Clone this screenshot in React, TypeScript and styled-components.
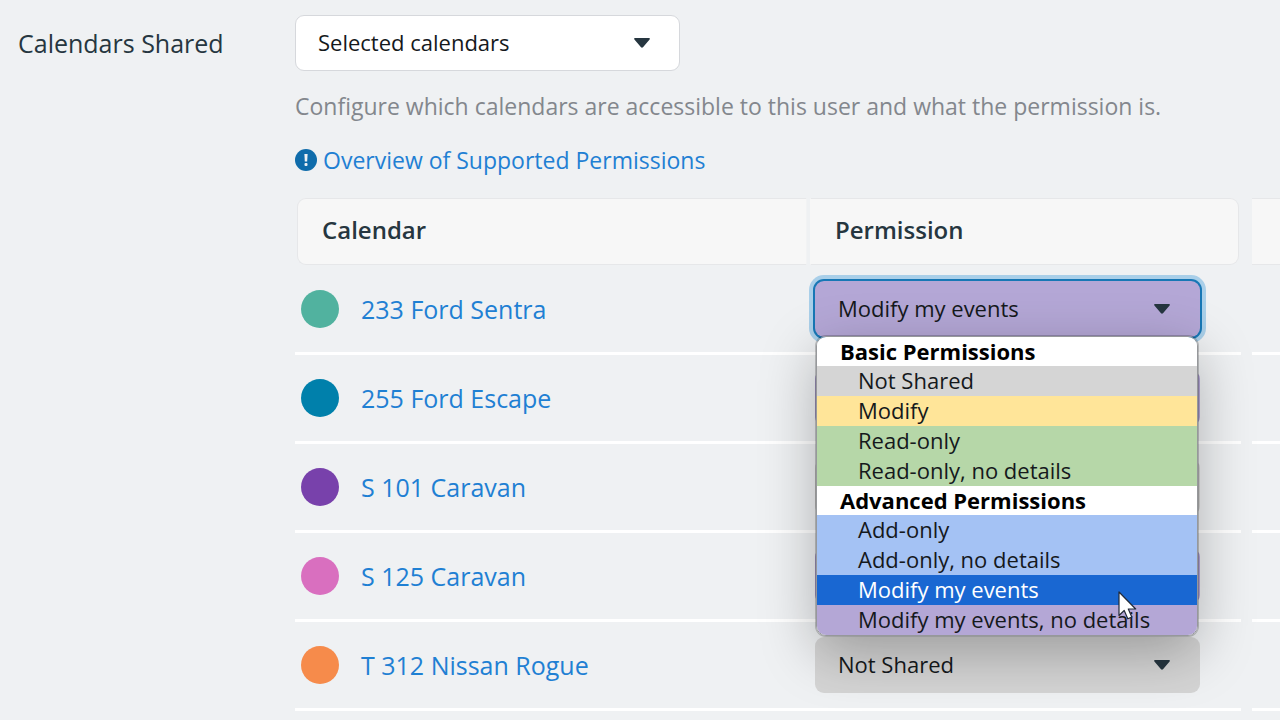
import React, { useState } from "react";
import styled, { createGlobalStyle, css } from "styled-components";

const GlobalStyle = createGlobalStyle`
  * { box-sizing: border-box; }
  body {
    margin: 0;
    background: #eff1f3;
    color: #263640;
    font-family: "Open Sans", "Noto Sans", sans-serif;
    font-size: 24px;
    line-height: 34px;
    overflow: hidden;
  }
`;

type Permission = "none" | "modify" | "read" | "add" | "own";

const tones: Record<Permission, string> = {
  none: "#d5d5d5",
  modify: "#ffe599",
  read: "#b6d7a8",
  add: "#a4c2f4",
  own: "#b4a7d6",
};

const Page = styled.main`
  display: flex;
  align-items: flex-start;
  padding: 15px 0 0 18px;
`;

const FieldLabel = styled.label`
  flex: none;
  width: 277px;
  padding-top: 11px;
  font-size: 25px;
`;

const Content = styled.section`
  flex: 1;
  min-width: 0;
`;

const SelectWrap = styled.div`
  position: relative;
  width: 385px;
  max-width: 100%;
`;

const Select = styled.select<{ $tone?: string; $open?: boolean }>`
  display: block;
  appearance: none;
  width: 100%;
  height: 56px;
  padding: 0 56px 2px 22px;
  border: 1px solid ${(p) => (p.$tone ? "transparent" : "#d6d8dc")};
  border-radius: 9px;
  background: ${(p) => p.$tone ?? "#fff"};
  color: #15191c;
  font: inherit;
  font-size: 22px;
  outline: none;
  ${(p) =>
    p.$open &&
    css`
      box-shadow: 0 0 0 2px #1777b5, 0 0 0 6px #a9cfe9;
    `}
`;

const CaretIcon = styled.svg`
  position: absolute;
  right: 30px;
  top: 23px;
  width: 16px;
  height: 10px;
  pointer-events: none;
`;

const Caret = () => (
  <CaretIcon viewBox="0 0 16 10" aria-hidden="true">
    <path d="M1 0h14c.9 0 1.2.8.6 1.5L9.2 9a1.6 1.6 0 0 1-2.4 0L.4 1.5C-.2.8.1 0 1 0z" fill="#263640" />
  </CaretIcon>
);

const Help = styled.p`
  margin: 18px 0 0;
  color: #83878d;
  font-size: 23px;
`;

const HelpLink = styled.a`
  display: flex;
  align-items: center;
  gap: 6px;
  width: fit-content;
  margin: 20px 0 21px;
  color: #1f80d3;
  font-size: 23px;
  text-decoration: none;
`;

const Tables = styled.div`
  display: flex;
  gap: 11px;
`;

const Table = styled.table`
  flex: 1;
  min-width: 0;
  table-layout: fixed;
  border-spacing: 0;
`;

const HeadCell = styled.th<{ $width?: string }>`
  width: ${(p) => p.$width ?? "auto"};
  padding: 0 0 1px;
  text-align: left;
  font-weight: 600;
`;

const HeadBox = styled.div<{ $edge: "start" | "end" | "open" }>`
  height: 67px;
  padding: 14px 24px;
  border: 1px solid #e6e7e9;
  background: #f7f7f7;
  ${(p) =>
    p.$edge === "start" &&
    css`
      margin: 0 2px;
      border-right-color: #f2f3f4;
      border-radius: 9px 0 0 9px;
    `}
  ${(p) =>
    p.$edge === "end" &&
    css`
      margin: 0 2px 0 1px;
      border-left-color: #f7f7f7;
      border-radius: 0 9px 9px 0;
    `}
  ${(p) =>
    p.$edge === "open" &&
    css`
      padding: 0;
      border-width: 1px 0;
    `}
`;

const Cell = styled.td`
  height: 89px;
  padding: 0 0 0 6px;
  border-bottom: 3px solid #fff;
  vertical-align: middle;
`;

const CalendarName = styled.div`
  display: flex;
  align-items: center;
  gap: 22px;
`;

const Dot = styled.span<{ $color: string }>`
  width: 38px;
  height: 38px;
  border-radius: 50%;
  background: ${(p) => p.$color};
`;

const CalendarLink = styled.a`
  color: #1f80d3;
  font-size: 25px;
  text-decoration: none;
`;

const SideTable = styled.table`
  flex: none;
  width: 28px;
  border-spacing: 0;
`;

const Menu = styled.div`
  position: absolute;
  z-index: 2;
  top: 55px;
  left: 1px;
  right: 2px;
  border: 1px solid #96989b;
  border-radius: 10px;
  box-shadow: 0 0 0 1px rgba(0, 0, 0, 0.2), 0 16px 56px rgba(0, 0, 0, 0.28);
  color: #15191c;
  font-size: 22px;
`;

const MenuList = styled.div`
  overflow: hidden;
  border-radius: 9px;
`;

const GroupTitle = styled.div`
  height: 29px;
  padding-left: 23px;
  background: #fff;
  color: #000;
  font-weight: 700;
  line-height: 28px;
`;

const Option = styled.div<{ $tone: string; $active: boolean }>`
  height: 30px;
  padding-left: 41px;
  background: ${(p) => (p.$active ? "#1967d2" : p.$tone)};
  color: ${(p) => (p.$active ? "#fff" : "inherit")};
  line-height: 28px;
  white-space: nowrap;
`;

const Pointer = styled.svg`
  position: absolute;
  right: 59px;
  bottom: 15px;
  width: 20px;
  height: 29px;
`;

const groups: { title: string; options: { label: string; tone: Permission }[] }[] = [
  {
    title: "Basic Permissions",
    options: [
      { label: "Not Shared", tone: "none" },
      { label: "Modify", tone: "modify" },
      { label: "Read-only", tone: "read" },
      { label: "Read-only, no details", tone: "read" },
    ],
  },
  {
    title: "Advanced Permissions",
    options: [
      { label: "Add-only", tone: "add" },
      { label: "Add-only, no details", tone: "add" },
      { label: "Modify my events", tone: "own" },
      { label: "Modify my events, no details", tone: "own" },
    ],
  },
];

const toneOf = (label: string) =>
  tones[groups.flatMap((g) => g.options).find((o) => o.label === label)?.tone ?? "none"];

const calendars = [
  { name: "233 Ford Sentra", color: "#51b29f", permission: "Modify my events" },
  { name: "255 Ford Escape", color: "#0080ab", permission: "Modify my events" },
  { name: "S 101 Caravan", color: "#7841ab", permission: "Not Shared" },
  { name: "S 125 Caravan", color: "#d96fbf", permission: "Modify my events" },
  { name: "T 312 Nissan Rogue", color: "#f68b4b", permission: "Not Shared" },
];

function PermissionMenu({ value, onPick }: { value: string; onPick: (label: string) => void }) {
  return (
    <Menu>
      <MenuList role="listbox" aria-label="Permission">
        {groups.map((group) => (
          <div role="group" aria-label={group.title} key={group.title}>
            <GroupTitle>{group.title}</GroupTitle>
            {group.options.map((o) => (
              <Option
                key={o.label}
                role="option"
                aria-selected={o.label === value}
                $tone={tones[o.tone]}
                $active={o.label === value}
                onClick={() => onPick(o.label)}
              >
                {o.label}
              </Option>
            ))}
          </div>
        ))}
      </MenuList>
      <Pointer viewBox="0 0 20 29" aria-hidden="true">
        <path
          d="M1 1v23.5l5.2-5 3.6 8.3 4-1.7-3.5-8.1h7.4z"
          fill="#fff"
          stroke="#222a38"
          strokeWidth="1.2"
          strokeLinejoin="round"
        />
      </Pointer>
    </Menu>
  );
}

function PermissionSelect({ name, initial, open }: { name: string; initial: string; open: boolean }) {
  const [value, setValue] = useState(initial);
  return (
    <SelectWrap>
      <Select
        aria-label={`Permission for ${name}`}
        value={value}
        onChange={(e) => setValue(e.target.value)}
        $tone={toneOf(value)}
        $open={open}
      >
        {groups.map((g) => (
          <optgroup label={g.title} key={g.title}>
            {g.options.map((o) => (
              <option key={o.label}>{o.label}</option>
            ))}
          </optgroup>
        ))}
      </Select>
      <Caret />
      {open && <PermissionMenu value={value} onPick={setValue} />}
    </SelectWrap>
  );
}

export default function App() {
  return (
    <>
      <GlobalStyle />
      <Page>
        <FieldLabel htmlFor="shared">Calendars Shared</FieldLabel>
        <Content>
          <SelectWrap>
            <Select id="shared" defaultValue="Selected calendars">
              <option>Selected calendars</option>
              <option>All calendars</option>
            </Select>
            <Caret />
          </SelectWrap>
          <Help>Configure which calendars are accessible to this user and what the permission is.</Help>
          <HelpLink href="#permissions">
            <svg width="22" height="22" viewBox="0 0 22 22" aria-hidden="true">
              <circle cx="11" cy="11" r="11" fill="#0f6cab" />
              <path d="M9.4 5h3.2l-.4 7.4H9.8z" fill="#eff1f3" />
              <rect x="9.5" y="14" width="3" height="3" rx="1" fill="#eff1f3" />
            </svg>
            Overview of Supported Permissions
          </HelpLink>
          <Tables>
            <Table>
              <thead>
                <tr>
                  <HeadCell scope="col">
                    <HeadBox $edge="start">Calendar</HeadBox>
                  </HeadCell>
                  <HeadCell scope="col" $width="432px">
                    <HeadBox $edge="end">Permission</HeadBox>
                  </HeadCell>
                </tr>
              </thead>
              <tbody>
                {calendars.map((c, i) => (
                  <tr key={c.name}>
                    <Cell>
                      <CalendarName>
                        <Dot $color={c.color} />
                        <CalendarLink href="#calendar">{c.name}</CalendarLink>
                      </CalendarName>
                    </Cell>
                    <Cell>
                      <PermissionSelect name={c.name} initial={c.permission} open={i === 0} />
                    </Cell>
                  </tr>
                ))}
              </tbody>
            </Table>
            <SideTable aria-hidden="true">
              <thead>
                <tr>
                  <HeadCell as="td">
                    <HeadBox $edge="open" />
                  </HeadCell>
                </tr>
              </thead>
              <tbody>
                {calendars.map((c) => (
                  <tr key={c.name}>
                    <Cell />
                  </tr>
                ))}
              </tbody>
            </SideTable>
          </Tables>
        </Content>
      </Page>
    </>
  );
}
